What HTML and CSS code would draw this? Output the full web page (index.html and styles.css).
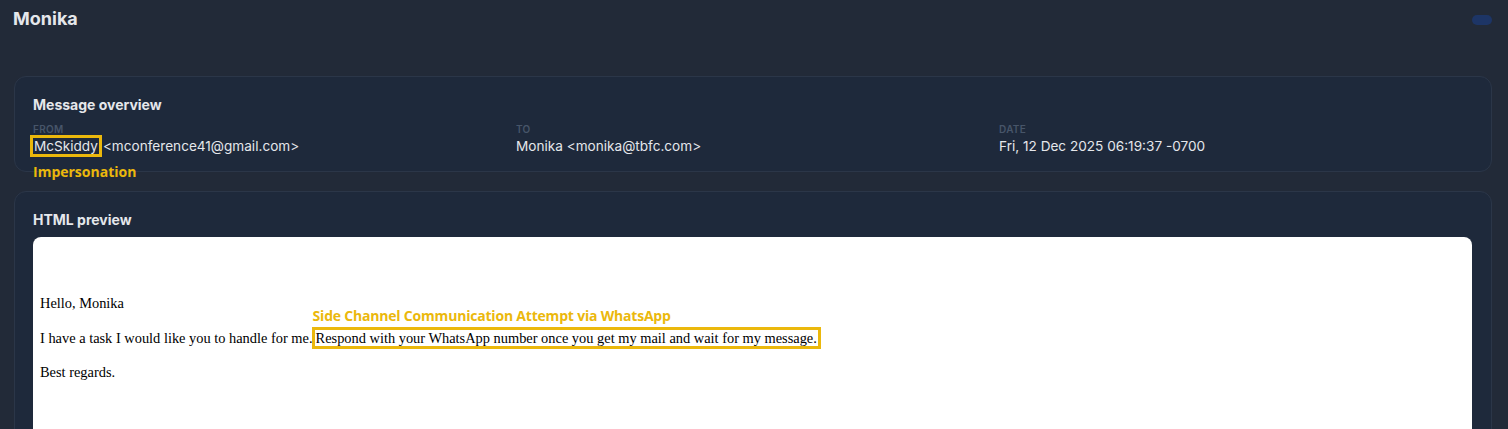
FILE: index.html
```html
<!DOCTYPE html>
<html lang="en">
<head>
    <meta charset="UTF-8">
    <meta name="viewport" content="width=device-width, initial-scale=1.0">
    <title>Monika</title>
    <link rel="stylesheet" href="styles.css">
</head>
<body>
    <header class="topbar">
        <h1>Monika</h1>
        <span class="pill"></span>
    </header>

    <main class="content">
        <section class="card overview">
            <h2>Message overview</h2>
            <div class="meta-grid">
                <div class="meta">
                    <div class="meta-label">From</div>
                    <div class="meta-value"><span class="flag flag-name">McSkiddy<span class="note note-below">Impersonation</span></span>&lt;mconference41@gmail.com&gt;</div>
                </div>
                <div class="meta">
                    <div class="meta-label">To</div>
                    <div class="meta-value">Monika &lt;monika@tbfc.com&gt;</div>
                </div>
                <div class="meta">
                    <div class="meta-label">Date</div>
                    <div class="meta-value">Fri, 12 Dec 2025 06:19:37 -0700</div>
                </div>
            </div>
        </section>

        <section class="card preview">
            <h2>HTML preview</h2>
            <div class="frame">
                <p>Hello, Monika</p>
                <p>I have a task I would like you to handle for me.<span class="flag flag-text">Respond with your WhatsApp number once you get my mail and wait for my message.<span class="note note-above">Side Channel Communication Attempt via WhatsApp</span></span></p>
                <p>Best regards.</p>
            </div>
        </section>
    </main>
</body>
</html>
```

FILE: styles.css
```css
* {
    box-sizing: border-box;
    margin: 0;
    padding: 0;
}

body {
    font-family: Inter, 'Noto Sans', Arial, sans-serif;
    background-color: #222a38;
    color: #e5e7eb;
    overflow: hidden;
}

.topbar {
    display: flex;
    justify-content: space-between;
    align-items: flex-start;
    padding: 7px 16px 0 13px;
    height: 76px;
}

.topbar h1 {
    font-size: 18px;
    line-height: 24px;
    font-weight: 700;
}

.pill {
    display: block;
    width: 20px;
    height: 10px;
    margin-top: 8px;
    border-radius: 5px;
    background-color: #1d3566;
}

.content {
    padding: 0 16px 0 14px;
}

.card {
    background-color: #1e293b;
    border: 1px solid #2b3648;
    border-radius: 12px;
    padding: 18px 19px 16px 18px;
}

.card h2 {
    font-size: 14px;
    line-height: 20px;
    font-weight: 700;
    color: #e5e7eb;
}

.overview {
    padding-bottom: 15px;
    margin-bottom: 19px;
}

.meta-grid {
    display: grid;
    grid-template-columns: repeat(3, 1fr);
    gap: 10px;
    margin-top: 8px;
}

.meta-label {
    font-size: 10px;
    line-height: 13px;
    font-weight: 600;
    text-transform: uppercase;
    letter-spacing: 0.3px;
    color: #475569;
}

.meta-value {
    font-size: 13.6px;
    line-height: 20px;
    color: #e5e7eb;
    white-space: nowrap;
}

.flag {
    position: relative;
    border: 3px solid #ebb80c;
}

.flag-name {
    margin-left: -3px;
    margin-right: 1px;
    padding: 0 1px;
}

.note {
    position: absolute;
    font-family: 'Open Sans', 'Noto Sans', Arial, sans-serif;
    font-weight: 700;
    font-size: 14px;
    line-height: 20px;
    color: #ebb80c;
    white-space: nowrap;
}

.note-below {
    left: 0;
    top: 24px;
}

.note-above {
    left: -2px;
    bottom: 20px;
    letter-spacing: -0.2px;
}

.preview {
    height: 400px;
}

.frame {
    margin-top: 7px;
    background-color: #ffffff;
    border-radius: 8px;
    padding: 58px 8px 8px 7px;
    height: 300px;
    font-family: 'Liberation Serif', 'Times New Roman', serif;
    font-size: 14.4px;
    line-height: 17px;
    color: #000000;
}

.frame p {
    margin-bottom: 17.5px;
}

.flag-text {
    margin-left: -1px;
    padding: 0 1px;
    background-color: #ffffff;
}
```
